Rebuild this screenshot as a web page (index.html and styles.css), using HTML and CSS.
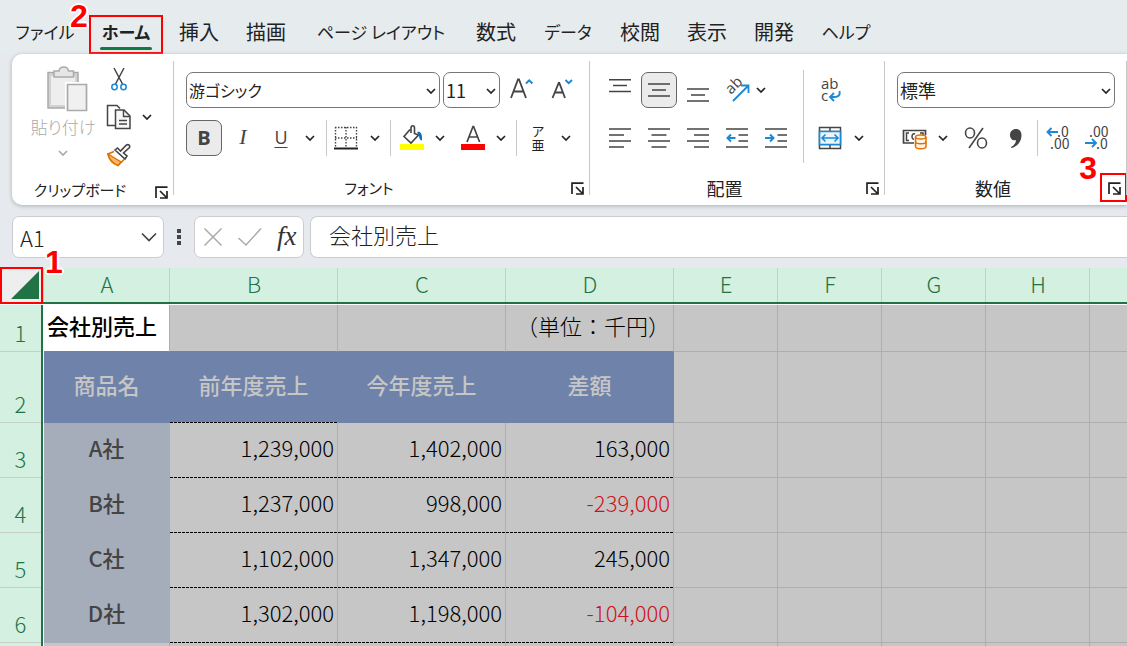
FILE: index.html
```html
<!DOCTYPE html>
<html lang="ja">
<head>
<meta charset="utf-8">
<title>会社別売上</title>
<link rel="stylesheet" href="styles.css">
</head>
<body>
<svg class="defs" aria-hidden="true">
  <symbol id="chev" viewBox="0 0 10 6"><path d="M1 1l4 4 4-4" fill="none" stroke="currentColor" stroke-width="1.7"/></symbol>
  <symbol id="launch" viewBox="0 0 13 13"><path d="M1 12V1.2h11.500" fill="none" stroke="#222" stroke-width="1.700"/><path d="M5 5l6.500 6.500M12 5v7H5" fill="none" stroke="#222" stroke-width="1.700"/></symbol>
</svg>

<nav class="tabs">
  <a href="#" class="kana">ファイル</a>
  <a href="#" class="kana active">ホーム<span class="mark tab-mark"></span><span class="num tab-num">2</span></a>
  <a href="#">挿入</a>
  <a href="#">描画</a>
  <a href="#" class="kana">ページ レイアウト</a>
  <a href="#">数式</a>
  <a href="#" class="kana">データ</a>
  <a href="#">校閲</a>
  <a href="#">表示</a>
  <a href="#">開発</a>
  <a href="#" class="kana">ヘルプ</a>
</nav>

<main class="ribbon">
  <section class="group clipboard">
    <div class="clip-body">
      <button class="paste" disabled>
        <svg width="42" height="46" viewBox="0 0 42 46"><path d="M2 6.500h30V42H2z" fill="#d2d2d2" stroke="#aaa" stroke-width="1.500"/><path d="M5 10h24v29H5z" fill="#eee"/><path d="M8 11V5h5c.5-5.500 9-5.500 9.500 0h5v6z" fill="#e6e6e6" stroke="#aaa" stroke-width="1.500"/><path d="M19 16h23v30H19z" fill="#fff"/><path d="M21.500 18.500h19v26h-19z" fill="#f0f0f0" stroke="#aaa" stroke-width="1.700"/></svg>
        <span>貼り付け</span>
        <svg class="chev" width="10" height="6"><use href="#chev"/></svg>
      </button>
      <div class="clip-tools">
        <button aria-label="切り取り"><svg width="16" height="24" viewBox="0 0 16 24"><path d="M3 1l8.500 16M13 1L4.500 17" fill="none" stroke="#444" stroke-width="1.500"/><circle cx="3.500" cy="20" r="2.700" fill="#fff" stroke="#1e88d2" stroke-width="1.500"/><circle cx="12.500" cy="20" r="2.700" fill="#fff" stroke="#1e88d2" stroke-width="1.500"/></svg></button>
        <span></span>
        <button aria-label="コピー"><svg width="26" height="26" viewBox="0 0 26 26"><path d="M9 21.500H1.500v-20H11l3 3" fill="none" stroke="#444" stroke-width="1.500"/><path d="M9.500 6H18l6 6v12.500H9.500z" fill="#f7f7f7" stroke="#444" stroke-width="1.500"/><path d="M17.500 6v6.500H24M13 16.500h8M13 20h8" fill="none" stroke="#444" stroke-width="1.400"/></svg></button>
        <button aria-label="コピーのオプション"><svg class="chev" width="10" height="6"><use href="#chev"/></svg></button>
        <button aria-label="書式のコピー"><svg width="26" height="24" viewBox="0 0 26 24"><path d="M8 8.500L2 11c1 5 4 9 10 11.500l6-6" fill="#fff" stroke="#e07000" stroke-width="1.700"/><path d="M2 11l13 8-3 3.500C6 20 3 16 2 11z" fill="#f9b66b" stroke="#e07000" stroke-width="1.300"/><path d="M9 7l10 9 2-3-3.500-3 6-5.500c1-2-1-3.500-3-2.500L14.500 8 11.500 5z" fill="#fff" stroke="#444" stroke-width="1.600"/></svg></button>
      </div>
    </div>
    <footer><span class="kana">クリップボード</span><button class="launcher" aria-label="クリップボードの詳細"><svg width="13" height="13"><use href="#launch"/></svg></button></footer>
  </section>

  <section class="group font">
    <div class="row selects">
      <label class="combo family"><select class="kana" aria-label="フォント名"><option>游ゴシック</option></select><svg class="chev" width="10" height="6"><use href="#chev"/></svg></label>
      <label class="combo size"><select aria-label="フォントサイズ"><option>11</option></select><svg class="chev" width="10" height="6"><use href="#chev"/></svg></label>
      <button class="grow" aria-label="拡大"><svg width="24" height="24" viewBox="0 0 24 24"><path d="M1 20L8 1.500h1L16 20M3.500 13.500h10" fill="none" stroke="#444" stroke-width="1.800"/><path d="M16 5.500l3.200-3.200 3.200 3.200" fill="none" stroke="#1e88d2" stroke-width="2"/></svg></button>
      <button class="shrink" aria-label="縮小"><svg width="24" height="24" viewBox="0 0 24 24"><path d="M2.500 20L8.700 5h.6L15 20M5 14.500h8" fill="none" stroke="#444" stroke-width="1.800"/><path d="M15.500 2l3.200 3.200L22 2" fill="none" stroke="#1e88d2" stroke-width="2"/></svg></button>
    </div>
    <div class="row font-tools">
      <button class="on bold">B</button>
      <button class="italic">I</button>
      <button class="under">U</button>
      <button aria-label="下線"><svg class="chev" width="10" height="6"><use href="#chev"/></svg></button>
      <i class="sep"></i>
      <button aria-label="罫線"><svg width="24" height="24" viewBox="0 0 24 24"><path d="M1 1.500h22M1 12h22M1.500 1v20M22.500 1v20M12 1v20" fill="none" stroke="#444" stroke-width="1.400" stroke-dasharray="1.500 1.500"/><path d="M0 22.500h24" stroke="#222" stroke-width="2"/></svg></button>
      <button aria-label="罫線の種類"><svg class="chev" width="10" height="6"><use href="#chev"/></svg></button>
      <i class="sep"></i>
      <button aria-label="塗りつぶし"><svg width="24" height="26" viewBox="0 0 24 26"><path d="M10 4.500L4 11.500l7 6.500 7.500-8-4-1.500V3c0-3-3.500-3-3.500 0v5" fill="none" stroke="#444" stroke-width="1.600"/><path d="M17 7c3-1 5.500 1 5 8.500-2 0-3-3-3-5z" fill="#0f6cbd"/><path d="M0 19h24v6H0z" fill="#ff0"/></svg></button>
      <button aria-label="塗りつぶしの色"><svg class="chev" width="10" height="6"><use href="#chev"/></svg></button>
      <button aria-label="フォントの色"><svg width="24" height="26" viewBox="0 0 24 26"><path d="M6 17L12 1.500h.6l6 15.500M8 12h8.500" fill="none" stroke="#444" stroke-width="1.700"/><path d="M0 19h24v6H0z" fill="#f00"/></svg></button>
      <button aria-label="色の選択"><svg class="chev" width="10" height="6"><use href="#chev"/></svg></button>
      <i class="sep"></i>
      <button class="ruby"><span>ア</span><span>亜</span></button>
      <button aria-label="ふりがな"><svg class="chev" width="10" height="6"><use href="#chev"/></svg></button>
    </div>
    <footer><span class="kana">フォント</span><button class="launcher" aria-label="フォントの詳細"><svg width="13" height="13"><use href="#launch"/></svg></button></footer>
  </section>

  <section class="group align">
    <div class="align-body">
      <div class="align-tools">
        <button aria-label="上揃え"><svg width="22" height="22" viewBox="0 0 22 22"><path d="M0 .8h22M4 6.500h14M0 12.500h22" stroke="#444" stroke-width="1.600"/></svg></button>
        <button class="on" aria-label="上下中央揃え"><svg width="22" height="22" viewBox="0 0 22 22"><path d="M0 5h22M4 11h14M0 17h22" stroke="#444" stroke-width="1.600"/></svg></button>
        <button aria-label="下揃え"><svg width="22" height="24" viewBox="0 0 22 24"><path d="M0 11h22M4 17h14M0 23h22" stroke="#444" stroke-width="1.600"/></svg></button>
        <button aria-label="方向"><svg width="26" height="26" viewBox="0 0 26 26"><text class="glyph" transform="translate(7 18) rotate(-45)">ab</text><path d="M9 24L24 9M17 8.500h7.500V16" fill="none" stroke="#1e88d2" stroke-width="1.800"/></svg></button>
        <button class="orient-more" aria-label="方向の選択"><svg class="chev" width="10" height="6"><use href="#chev"/></svg></button>
        <button aria-label="左揃え"><svg width="22" height="22" viewBox="0 0 22 22"><path d="M0 2h22M0 8h15M0 14h22M0 20h15" stroke="#444" stroke-width="1.600"/></svg></button>
        <button aria-label="中央揃え"><svg width="22" height="22" viewBox="0 0 22 22"><path d="M0 2h22M3.500 8h15M0 14h22M3.500 20h15" stroke="#444" stroke-width="1.600"/></svg></button>
        <button aria-label="右揃え"><svg width="22" height="22" viewBox="0 0 22 22"><path d="M0 2h22M7 8h15M0 14h22M7 20h15" stroke="#444" stroke-width="1.600"/></svg></button>
        <button aria-label="インデントを減らす"><svg width="22" height="22" viewBox="0 0 22 22"><path d="M0 2h22M12.500 8H22M12.500 14H22M0 20h22" stroke="#444" stroke-width="1.600"/><path d="M9.500 11H1.500M5 7.500L1.500 11 5 14.500" fill="none" stroke="#1e88d2" stroke-width="2"/></svg></button>
        <button aria-label="インデントを増やす"><svg width="22" height="22" viewBox="0 0 22 22"><path d="M0 2h22M12.500 8H22M12.500 14H22M0 20h22" stroke="#444" stroke-width="1.600"/><path d="M0 11h8.500M5 7.500L8.500 11 5 14.500" fill="none" stroke="#1e88d2" stroke-width="2"/></svg></button>
      </div>
      <div class="wrap-tools">
        <button aria-label="折り返して全体を表示する"><svg width="22" height="26" viewBox="0 0 22 26"><text class="glyph"><tspan x="2" y="12">ab</tspan><tspan x="2" y="24">c</tspan></text><path d="M20.500 14c1 4-1 6-5 6h-4M15 16l-4 4 4 4" fill="none" stroke="#1e88d2" stroke-width="1.900"/></svg></button>
        <span></span>
        <button aria-label="セルを結合して中央揃え"><svg width="24" height="24" viewBox="0 0 24 24"><path d="M1.500 1.500h21v21h-21zM1 5.500h22M1 18.500h22M12 1v4M12 19v4" fill="none" stroke="#444" stroke-width="1.500"/><path d="M1.500 5.500h21v13h-21z" fill="#eaf5fd" stroke="#1e88d2" stroke-width="1.700"/><path d="M4 12h16M7.500 8.500L4 12l3.500 3.500M16.500 8.500L20 12l-3.500 3.500" fill="none" stroke="#1e88d2" stroke-width="1.600"/></svg></button>
        <button aria-label="結合の種類"><svg class="chev" width="10" height="6"><use href="#chev"/></svg></button>
      </div>
    </div>
    <footer><span>配置</span><button class="launcher" aria-label="配置の詳細"><svg width="13" height="13"><use href="#launch"/></svg></button></footer>
  </section>

  <section class="group number">
    <div class="row">
      <label class="combo format"><select aria-label="表示形式"><option>標準</option></select><svg class="chev" width="10" height="6"><use href="#chev"/></svg></label>
    </div>
    <div class="row number-tools">
      <button aria-label="通貨"><svg width="26" height="24" viewBox="0 0 26 24"><path d="M1.500 4.500h22V17h-22z" fill="#fff" stroke="#444" stroke-width="1.700"/><path d="M7 7H4.500v7.500H7M13 8c-4-2-4 7 0 5M18 7h3v3" fill="none" stroke="#444" stroke-width="1.500"/><path d="M12 9h14v15H12z" fill="#fff"/><path d="M13.500 11v9.500c0 3 10.500 3 10.500 0V11" fill="#fff4e5" stroke="#e07000" stroke-width="1.500"/><ellipse cx="18.700" cy="11" rx="5.200" ry="2" fill="#fff4e5" stroke="#e07000" stroke-width="1.500"/><path d="M13.500 15.500c0 3 10.500 3 10.500 0" fill="none" stroke="#e07000" stroke-width="1.500"/></svg></button>
      <button aria-label="通貨の種類"><svg class="chev" width="10" height="6"><use href="#chev"/></svg></button>
      <button aria-label="パーセント"><svg width="24" height="24" viewBox="0 0 24 24"><g fill="none" stroke="#444" stroke-width="1.600"><ellipse cx="6" cy="7" rx="4.500" ry="5"/><ellipse cx="18" cy="17" rx="4.500" ry="5"/><path d="M19 2L5 22"/></g></svg></button>
      <button aria-label="桁区切り"><svg width="14" height="22" viewBox="0 0 14 22"><path d="M2 20c3-1.500 5-4 5-7-3 1-6-1-6-5 0-3.500 2.500-6 6-6 3.500 0 5.500 2.500 5.500 6.500C12.500 15 8 19.500 2.500 21z" fill="#444"/></svg></button>
      <i class="sep"></i>
      <button aria-label="小数点以下の表示桁数を増やす"><svg width="26" height="26" viewBox="0 0 26 26"><text class="dec"><tspan x="12" y="12">.0</tspan><tspan x="5" y="24">.00</tspan></text><path d="M13 7H2.500M6.500 3L2.500 7l4 4" fill="none" stroke="#1e88d2" stroke-width="1.900"/></svg></button>
      <button aria-label="小数点以下の表示桁数を減らす"><svg width="26" height="26" viewBox="0 0 26 26"><text class="dec"><tspan x="5" y="12">.00</tspan><tspan x="12" y="24">.0</tspan></text><path d="M1 18h11M8 14l4 4-4 4" fill="none" stroke="#1e88d2" stroke-width="1.900"/></svg></button>
    </div>
    <footer><span>数値</span><button class="launcher" aria-label="数値の詳細"><svg width="13" height="13"><use href="#launch"/></svg><span class="mark launch-mark"></span><span class="num launch-num">3</span></button></footer>
  </section>
</main>

<div class="formula-bar">
  <label class="name-box"><input value="A1" aria-label="名前ボックス"><svg width="16" height="10" viewBox="0 0 16 10"><path d="M1 1.500l7 7 7-7" fill="none" stroke="#444" stroke-width="1.700"/></svg></label>
  <svg class="dots" width="4" height="16" viewBox="0 0 4 16"><path d="M0 0h4v4H0zM0 6h4v4H0zM0 12h4v4H0z" fill="#444"/></svg>
  <div class="fx-box">
    <button aria-label="キャンセル"><svg width="20" height="20" viewBox="0 0 20 20"><path d="M1.500 1.500l17 17M18.500 1.500l-17 17" stroke="#aaa" stroke-width="1.500"/></svg></button>
    <button aria-label="入力"><svg width="26" height="20" viewBox="0 0 26 20"><path d="M1.500 11l7.500 7L24 1.500" fill="none" stroke="#aaa" stroke-width="1.500"/></svg></button>
    <button class="fx">fx</button>
  </div>
  <input class="formula" value="会社別売上" aria-label="数式バー">
</div>

<div class="sheet">
  <span class="mark corner-mark"></span><span class="num corner-num">1</span>
  <table>
    <colgroup><col class="c-head"><col class="c-a"><col class="c-wide"><col class="c-wide"><col class="c-wide"><col class="c-std"><col class="c-std"><col class="c-std"><col class="c-std"><col></colgroup>
    <thead>
      <tr><th class="corner"><svg width="28" height="28" viewBox="0 0 28 28"><path d="M28 0v28H0z" fill="#217346"/></svg></th><th>A</th><th>B</th><th>C</th><th>D</th><th>E</th><th>F</th><th>G</th><th>H</th><th></th></tr>
    </thead>
    <tbody>
      <tr class="title"><th>1</th><td class="current">会社別売上</td><td></td><td></td><td class="unit">（単位：千円）</td><td></td><td></td><td></td><td></td><td></td></tr>
      <tr class="heads"><th>2</th><td>商品名</td><td class="dash">前年度売上</td><td>今年度売上</td><td>差額</td><td></td><td></td><td></td><td></td><td></td></tr>
      <tr class="data"><th>3</th><td>A社</td><td>1,239,000</td><td>1,402,000</td><td>163,000</td><td></td><td></td><td></td><td></td><td></td></tr>
      <tr class="data"><th>4</th><td>B社</td><td>1,237,000</td><td>998,000</td><td class="neg">-239,000</td><td></td><td></td><td></td><td></td><td></td></tr>
      <tr class="data"><th>5</th><td>C社</td><td>1,102,000</td><td>1,347,000</td><td>245,000</td><td></td><td></td><td></td><td></td><td></td></tr>
      <tr class="data"><th>6</th><td>D社</td><td>1,302,000</td><td>1,198,000</td><td class="neg">-104,000</td><td></td><td></td><td></td><td></td><td></td></tr>
      <tr class="blank"><th></th><td></td><td></td><td></td><td></td><td></td><td></td><td></td><td></td><td></td></tr>
    </tbody>
  </table>
</div>
</body>
</html>
```

FILE: styles.css
```css
* { box-sizing: border-box; }
body {
  margin: 0;
  height: 100vh;
  display: flex;
  flex-direction: column;
  overflow: hidden;
  background: #e6eaee;
  color: #222;
  font-family: "Noto Sans CJK JP", sans-serif;
  font-size: 20px;
  font-weight: 300;
}
button, select, input { font: inherit; color: inherit; border: 0; background: none; padding: 0; margin: 0; }
button { display: flex; align-items: center; justify-content: center; height: 36px; }
svg { display: block; flex: none; overflow: visible; }
.defs { position: absolute; width: 0; height: 0; }
.kana { font-size: 17px; font-feature-settings: "palt"; }
.chev { color: #222; }

/* annotations */
.mark { position: absolute; border: 2px solid #f00; }
.num {
  position: absolute;
  font: bold 32px/32px "Liberation Sans", Arial, sans-serif;
  color: #f00;
  text-shadow: 2px 0 #fff, -2px 0 #fff, 0 2px #fff, 0 -2px #fff, 1px 1px #fff, -1px -1px #fff, 1px -1px #fff, -1px 1px #fff;
  z-index: 3;
}

/* tabs */
.tabs {
  display: grid;
  grid-template-columns: 56px 52px 40px 40px 136px 40px 50px 40px 40px 40px 50px;
  column-gap: 27px;
  height: 54px;
  padding: 10px 17px 0;
  background: #e6ebed;
  align-items: center;
  justify-items: center;
  flex: none;
}
.tabs a { position: relative; color: #222; text-decoration: none; white-space: nowrap; line-height: 32px; font-weight: 400; }
.tabs .active { font-weight: 700; width: 52px; text-align: center; }
.tabs .active::after { content: ""; position: absolute; left: 0; right: 0; bottom: -2px; height: 3px; border-radius: 2px; background: #107c41; }
.tab-mark { inset: -1px -11px -6px; }
.tab-num { left: -30px; top: -16px; }

/* ribbon */
.ribbon {
  position: relative;
  z-index: 1;
  display: flex;
  flex: none;
  height: 151px;
  margin-left: 12px;
  background: #fff;
  border-radius: 10px 0 0 10px;
  box-shadow: 0 1px 4px #a8aeb4;
}
.group { position: relative; display: flex; flex-direction: column; padding-top: 18px; flex: none; }
.group::after { content: ""; position: absolute; right: 0; top: 7px; bottom: 10px; width: 1px; background: #c8c8c8; }
.group footer { display: flex; align-items: center; justify-content: center; position: relative; margin-top: auto; height: 35px; padding-right: 26px; font-size: 18px; font-weight: 400; }
.group footer .kana { font-size: 15px; }
.launcher { position: absolute; right: 6px; top: 10px; width: 13px; height: 16px; }
.row { display: flex; height: 36px; align-items: center; }
.row + .row { margin-top: 12px; }
.sep { width: 1px; height: 36px; background: #c8c8c8; }
.on { width: 36px; background: #ebebeb; border: 1px solid #666; border-radius: 7px; }

.clipboard { width: 162px; padding-top: 12px; }
.clip-body { display: flex; padding-left: 15px; }
.paste { flex-direction: column; width: 72px; height: 100px; justify-content: flex-start; color: #aaa; font-size: 17px; font-feature-settings: "palt"; line-height: 30px; }
.paste svg:first-child { margin-left: 8px; }
.paste .chev { color: #aaa; margin-top: 8px; }
.clip-tools { display: grid; grid-template-columns: 40px 16px; grid-template-rows: repeat(3, 38px); align-items: center; justify-items: center; margin-top: -6px; }

.font { width: 416px; padding-left: 12px; }
.combo { position: relative; display: block; height: 36px; }
.combo select { appearance: none; width: 100%; height: 36px; border: 1px solid #777; border-radius: 7px; background: #fff; padding-left: 2px; font-size: 18px; font-weight: 400; }
.combo .kana { font-size: 16px; }
.combo svg { position: absolute; right: 4px; top: 16px; pointer-events: none; }
.family { width: 254px; }
.size { width: 57px; margin-left: 3px; }
.format { width: 218px; }
.grow { margin-left: 10px; }
.shrink { margin-left: 16px; }
.font-tools, .number-tools { display: grid; justify-items: center; }
.font-tools { grid-template-columns: 36px 42px 34px 24px 8px 32px 26px 4px 40px 16px 50px 6px 24px 20px 36px; }
.bold { font-family: "Open Sans", sans-serif; font-weight: 700; color: #444; padding-bottom: 2px; }
.italic { font-family: "Liberation Serif", serif; font-style: italic; font-size: 22px; font-weight: 400; color: #444; padding-bottom: 2px; }
.under { font-family: "Open Sans", sans-serif; text-decoration: underline; text-underline-offset: 3px; font-size: 18px; font-weight: 400; color: #444; padding-bottom: 2px; }
.ruby { flex-direction: column; font-size: 13px; line-height: 14px; font-weight: 400; }

.align { width: 295px; }
.align-body { display: flex; padding-left: 10px; }
.align-tools { display: grid; grid-template-columns: repeat(5, 39px); row-gap: 12px; justify-items: center; }
.orient-more { justify-self: start; }
.wrap-tools { display: grid; grid-template-columns: 38px 20px; row-gap: 12px; justify-items: center; margin-left: 8px; padding-left: 8px; position: relative; }
.wrap-tools::before { content: ""; position: absolute; left: 0; top: -2px; bottom: -7px; width: 1px; background: #c8c8c8; }
.glyph { font: 15px "Open Sans", sans-serif; fill: #444; }
.dec { font: 14px "Noto Sans CJK JP", sans-serif; fill: #444; }

.number { width: 242px; padding-left: 12px; }
.number-tools { grid-template-columns: 36px 20px 46px 34px 8px 34px 44px; }
.font footer, .number footer { margin-left: -12px; }
.launch-mark { inset: -7px -6px -6px -8px; }
.launch-num { right: 24px; top: -28px; }

/* formula bar */
.formula-bar { display: flex; flex: none; align-items: center; height: 63px; padding-left: 12px; background: #e6eaee; }
.name-box, .fx-box, .formula { height: 42px; background: #fff; border: 1px solid #ccc; border-radius: 7px; }
.name-box { display: flex; align-items: center; width: 152px; padding: 0 6px 0 7px; flex: none; }
.name-box input { flex: 1; min-width: 0; font-size: 22px; }
.dots { margin: 0 13px; }
.fx-box { display: flex; align-items: center; gap: 14px; width: 110px; padding: 0 8px; flex: none; }
.fx { font: italic 400 27px "Liberation Serif", serif; color: #333; }
.formula { flex: 1; min-width: 0; margin-left: 6px; padding: 0 0 5px 18px; border-right: 0; border-radius: 7px 0 0 7px; font-size: 22px; }

/* sheet */
.sheet { position: relative; flex: 1; min-height: 0; background: #c6c6c6; overflow: clip; overflow-clip-margin: 30px; }
.corner-mark { left: 0; top: -1px; width: 43px; height: 37px; }
.corner-num { left: 45px; top: -22px; }
table { width: 100%; table-layout: fixed; border-spacing: 0; font-size: 22px; line-height: 30px; }
.c-head { width: 44px; }
.c-a { width: 126px; }
.c-wide { width: 168px; }
.c-std { width: 104px; }
th { padding: 0; background: #d4f0e0; color: #217346; font-weight: 300; text-align: center; }
thead th { height: 37px; box-shadow: inset 0 -1px #fff, inset 0 -3px #217346, inset -1px 0 #c4cfc8; padding-bottom: 7px; line-height: 28px; }
thead th:last-child { box-shadow: inset 0 -1px #fff, inset 0 -3px #217346; }
thead .corner { background: #eee; padding: 0 0 3px 11px; }
tbody th { box-shadow: inset -1px 0 #fff, inset -3px 0 #217346, inset 0 -1px #c4cfc8; vertical-align: bottom; padding: 0 3px 5px 0; }
td { padding: 0 3px 6px; border-right: 1px solid #aeaeae; border-bottom: 1px solid #aeaeae; background: #c6c6c6; color: #000; white-space: nowrap; }
td:last-child { border-right: 0; }
.title td { height: 47px; }
.title td:nth-child(-n+5) { border-bottom-color: #6f83aa; }
.title .current { background: #fff; font-weight: 500; }
.unit { text-align: right; }
.heads td { height: 71px; }
.heads td:nth-child(-n+5) { background: #6f83aa; border-color: #6f83aa; color: #c6c6c6; font-weight: 500; text-align: center; }
.data td { height: 55px; }
.data td:nth-child(n+3):nth-child(-n+5) { text-align: right; }
.heads td.dash:nth-child(3), .data td:nth-child(n+3):nth-child(-n+5) {
  border-bottom-color: transparent;
  background-image: repeating-linear-gradient(90deg, #000 0 3px, #c6c6c6 3px 4px);
  background-size: 100% 1px;
  background-position: bottom;
  background-repeat: no-repeat;
  background-origin: border-box;
}
.data td:nth-child(2) { background: #a6adba; border-color: #a6adba; color: #444; font-weight: 500; text-align: center; }
.data .neg { color: #d0101c; }
.blank td { height: 55px; }
```
